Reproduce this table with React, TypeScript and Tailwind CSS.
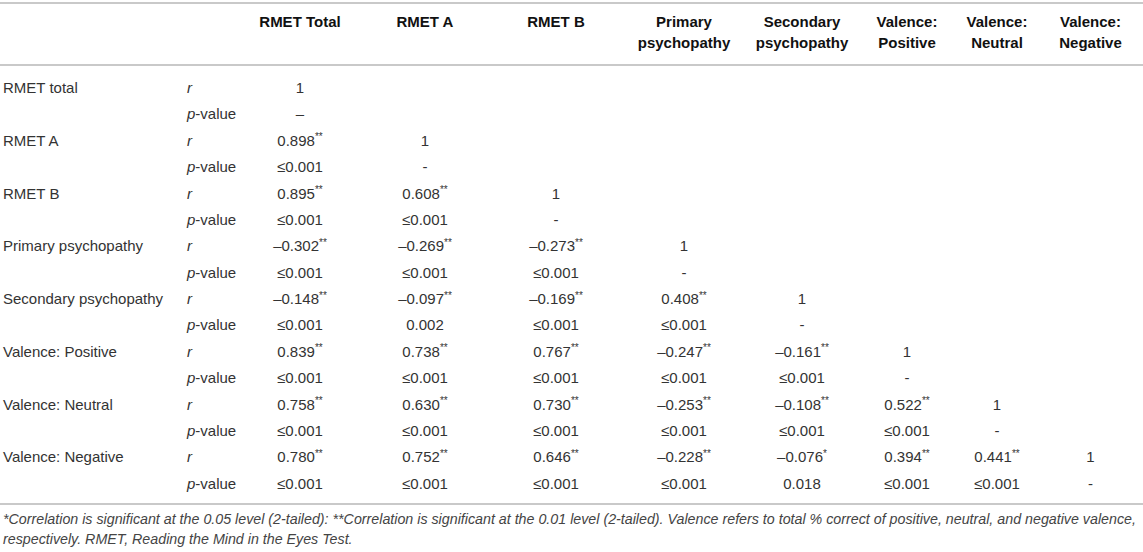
import React from 'react';

const cols = 'grid grid-cols-[185px_55px_120px_130px_132px_124px_112px_98px_82px_105px]';

const headers: string[][] = [
  ['RMET Total'],
  ['RMET A'],
  ['RMET B'],
  ['Primary', 'psychopathy'],
  ['Secondary', 'psychopathy'],
  ['Valence:', 'Positive'],
  ['Valence:', 'Neutral'],
  ['Valence:', 'Negative'],
];

const L = '≤0.001';

const rows: { label: string; r: string[]; p: string[] }[] = [
  { label: 'RMET total', r: ['1'], p: ['–'] },
  { label: 'RMET A', r: ['0.898**', '1'], p: [L, '-'] },
  { label: 'RMET B', r: ['0.895**', '0.608**', '1'], p: [L, L, '-'] },
  { label: 'Primary psychopathy', r: ['–0.302**', '–0.269**', '–0.273**', '1'], p: [L, L, L, '-'] },
  { label: 'Secondary psychopathy', r: ['–0.148**', '–0.097**', '–0.169**', '0.408**', '1'], p: [L, '0.002', L, L, '-'] },
  { label: 'Valence: Positive', r: ['0.839**', '0.738**', '0.767**', '–0.247**', '–0.161**', '1'], p: [L, L, L, L, L, '-'] },
  { label: 'Valence: Neutral', r: ['0.758**', '0.630**', '0.730**', '–0.253**', '–0.108**', '0.522**', '1'], p: [L, L, L, L, L, L, '-'] },
  {
    label: 'Valence: Negative',
    r: ['0.780**', '0.752**', '0.646**', '–0.228**', '–0.076*', '0.394**', '0.441**', '1'],
    p: [L, L, L, L, '0.018', L, L, '-'],
  },
];

function Value({ v }: { v: string }) {
  const m = v.match(/^(.*?)(\*+)$/);
  if (!m) return <span>{v}</span>;
  return (
    <span>
      {m[1]}
      <sup className="text-[10px] top-[-0.55em]">{m[2]}</sup>
    </span>
  );
}

function DataRow({ label, stat, values }: { label: string; stat: 'r' | 'p'; values: string[] }) {
  const cells = Array.from({ length: 8 }, (_, i) => values[i] ?? '');
  return (
    <div className={`${cols} h-[26.4px] items-center`}>
      <div className="pl-[3px] whitespace-nowrap">{label}</div>
      <div className="pl-[2px]">
        {stat === 'r' ? <i>r</i> : <><i>p</i>-value</>}
      </div>
      {cells.map((v, i) => (
        <div key={i} className="text-center">
          {v && <Value v={v} />}
        </div>
      ))}
    </div>
  );
}

export default function App() {
  return (
    <div className="w-[1143px] h-[552px] bg-white pt-[2px] font-['Liberation_Sans',Arial,sans-serif] text-[15px] text-[#333]">
      <div className={`${cols} border-t-2 border-b-2 border-[#c9c9c9] h-[64px] pt-[7px] leading-[21px] font-bold text-[#111]`}>
        <div />
        <div />
        {headers.map((h, i) => (
          <div key={i} className="text-center">
            {h.map((line) => (
              <div key={line}>{line}</div>
            ))}
          </div>
        ))}
      </div>
      <div className="pt-[9px] pb-[6px] border-b-2 border-[#c9c9c9]">
        {rows.map((row) => (
          <React.Fragment key={row.label}>
            <DataRow label={row.label} stat="r" values={row.r} />
            <DataRow label="" stat="p" values={row.p} />
          </React.Fragment>
        ))}
      </div>
      <div className="pt-[4px] pl-[3px] text-[14.25px] leading-[20px] italic text-[#444] whitespace-nowrap">
        <div>
          *Correlation is significant at the 0.05 level (2-tailed): **Correlation is significant at the 0.01 level (2-tailed). Valence refers to total % correct of positive, neutral, and negative valence,
        </div>
        <div>respectively. RMET, Reading the Mind in the Eyes Test.</div>
      </div>
    </div>
  );
}
